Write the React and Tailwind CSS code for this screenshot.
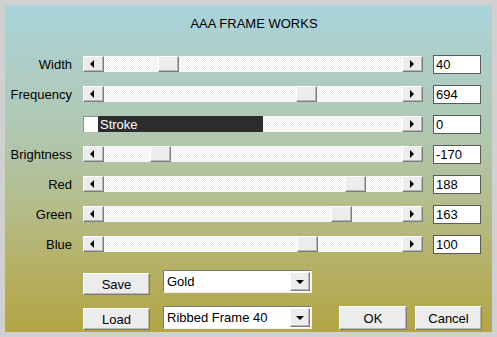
import React from "react";

const font = { fontFamily: '"Liberation Sans", Arial, sans-serif' };

function Btn3D({ className = "", children }) {
  return (
    <div
      className={
        "flex items-center justify-center bg-[#ececec] border border-t-white border-l-white border-b-[#7a7a7a] border-r-[#7a7a7a] shadow-[inset_-1px_-1px_0_#b8b8b8] " +
        className
      }
    >
      {children}
    </div>
  );
}

function LeftArrow() {
  return (
    <Btn3D className="h-4 w-[21px] shrink-0">
      <div className="mr-[3px] h-0 w-0 border-y-[4px] border-y-transparent border-r-[4px] border-r-black" />
    </Btn3D>
  );
}

function RightArrow() {
  return (
    <Btn3D className="h-4 w-[21px] shrink-0">
      <div className="mr-[1px] h-0 w-0 border-y-[4px] border-y-transparent border-l-[4px] border-l-black" />
    </Btn3D>
  );
}

const rows = [
  { label: "Width", value: "40", thumb: "left-[75px]" },
  { label: "Frequency", value: "694", thumb: "left-[213px]" },
  { label: "", value: "0", stroke: true },
  { label: "Brightness", value: "-170", thumb: "left-[67px]" },
  { label: "Red", value: "188", thumb: "left-[262px]" },
  { label: "Green", value: "163", thumb: "left-[248px]" },
  { label: "Blue", value: "100", thumb: "left-[214px]" },
];

const trackBg =
  "bg-[repeating-conic-gradient(#ffffff_0_25%,#ececec_0_50%)] bg-[length:2px_2px]";

function Row({ r }) {
  return (
    <div className="flex h-[30px] items-center">
      <div className="w-[67px] text-right leading-[15px]">{r.label}</div>
      <div className={"relative ml-[11px] flex h-4 w-[340px] " + trackBg}>
        {r.stroke ? (
          <>
            <div className="h-4 w-[15px] shrink-0 border-t border-l border-[#909090] bg-white" />
            <div className="flex h-4 w-[165px] shrink-0 items-center bg-[#2c2c2c] pl-[2px] leading-[15px] text-white">
              Stroke
            </div>
          </>
        ) : (
          <LeftArrow />
        )}
        <div className="flex-1" />
        <RightArrow />
        {r.thumb && (
          <Btn3D className={"absolute top-0 h-4 w-[21px] " + r.thumb} />
        )}
      </div>
      <div className="ml-[10px] flex h-[19px] w-[48px] items-center border border-[#5a5a5a] bg-white pl-[2px] leading-[15px]">
        {r.value}
      </div>
    </div>
  );
}

function Combo({ text }) {
  return (
    <div className="flex h-[23px] w-[149px] items-center border border-t-[#7a7a7a] border-l-[#7a7a7a] border-b-[#f0f0f0] border-r-[#f0f0f0] bg-white">
      <div className="flex-1 pl-[3px] leading-[15px]">{text}</div>
      <Btn3D className="mr-[1px] h-[19px] w-[20px]">
        <div className="h-0 w-0 border-x-[4px] border-x-transparent border-t-[4px] border-t-black" />
      </Btn3D>
    </div>
  );
}

export default function App() {
  return (
    <div
      className="h-[337px] w-[497px] bg-[#d0d0d0] p-[5px] text-[13px] text-black"
      style={font}
    >
      <div className="flex h-[327px] w-[487px] flex-col bg-[linear-gradient(to_bottom,#a9d5dd_0%,#aecdc6_18%,#b0c8b2_38%,#b4bc8a_62%,#b5af62_82%,#b3a546_100%)]">
        <div className="h-[44px] pl-[11px] pt-[11px] text-center leading-[15px]">
          AAA FRAME WORKS
        </div>
        {rows.map((r, i) => (
          <Row key={i} r={r} />
        ))}
        <div className="mt-[11px] flex h-[25px] items-start pl-[78px]">
          <Btn3D className="mt-[3px] h-[22px] w-[67px] leading-[15px]">Save</Btn3D>
          <div className="ml-[13px]">
            <Combo text="Gold" />
          </div>
        </div>
        <div className="mt-[11px] flex h-[24px] items-start pl-[78px]">
          <Btn3D className="mt-[2px] h-[22px] w-[67px] leading-[15px]">Load</Btn3D>
          <div className="ml-[13px]">
            <Combo text="Ribbed Frame 40" />
          </div>
          <Btn3D className="ml-[27px] h-[24px] w-[68px] leading-[15px]">OK</Btn3D>
          <Btn3D className="ml-[8px] h-[24px] w-[67px] leading-[15px]">Cancel</Btn3D>
        </div>
      </div>
    </div>
  );
}
